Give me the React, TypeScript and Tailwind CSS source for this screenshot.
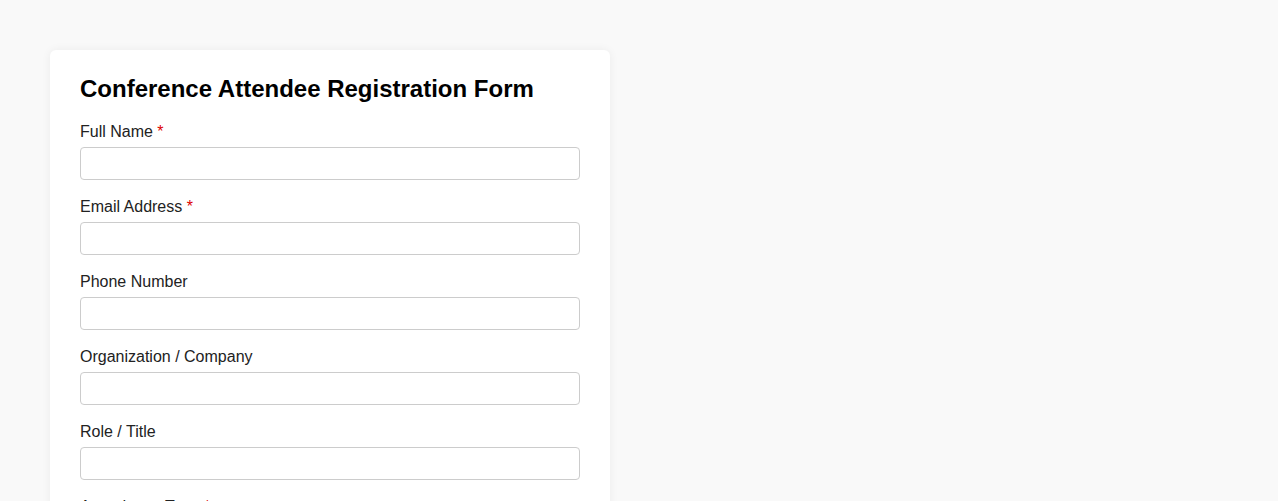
const fields = [
  { label: "Full Name", required: true, type: "text" },
  { label: "Email Address", required: true, type: "email" },
  { label: "Phone Number", required: false, type: "tel" },
  { label: "Organization / Company", required: false, type: "text" },
  { label: "Role / Title", required: false, type: "text" },
];

export default function App() {
  return (
    <div className="min-h-screen bg-[#f9f9f9] p-[50px] font-['Liberation_Sans',Arial,sans-serif] text-[#111]">
      <form className="w-[560px] rounded-md bg-white px-[30px] pt-[25px] pb-8 shadow-[0_0_10px_rgba(0,0,0,0.06)]">
        <h2 className="mb-[20px] text-2xl leading-[28px] font-bold text-black">
          Conference Attendee Registration Form
        </h2>

        <div className="flex flex-col gap-[18px]">
          {fields.map((f) => (
            <div key={f.label}>
              <label className="mb-[6px] block text-base leading-[18px] text-[#222]">
                {f.label}
                {f.required && <span className="text-[#d00]"> *</span>}
              </label>
              <input
                type={f.type}
                className="block h-[33px] w-full rounded-[4px] border border-[#ccc] bg-white px-2 text-base"
              />
            </div>
          ))}

          <div>
            <label className="mb-[6px] block text-base leading-[18px] text-[#222]">
              Attendance Type<span className="text-[#d00]"> *</span>
            </label>
            <select className="block h-[33px] w-full rounded-[4px] border border-[#ccc] bg-white px-2 text-base">
              <option>In-person</option>
            </select>
          </div>
        </div>
      </form>
    </div>
  );
}
